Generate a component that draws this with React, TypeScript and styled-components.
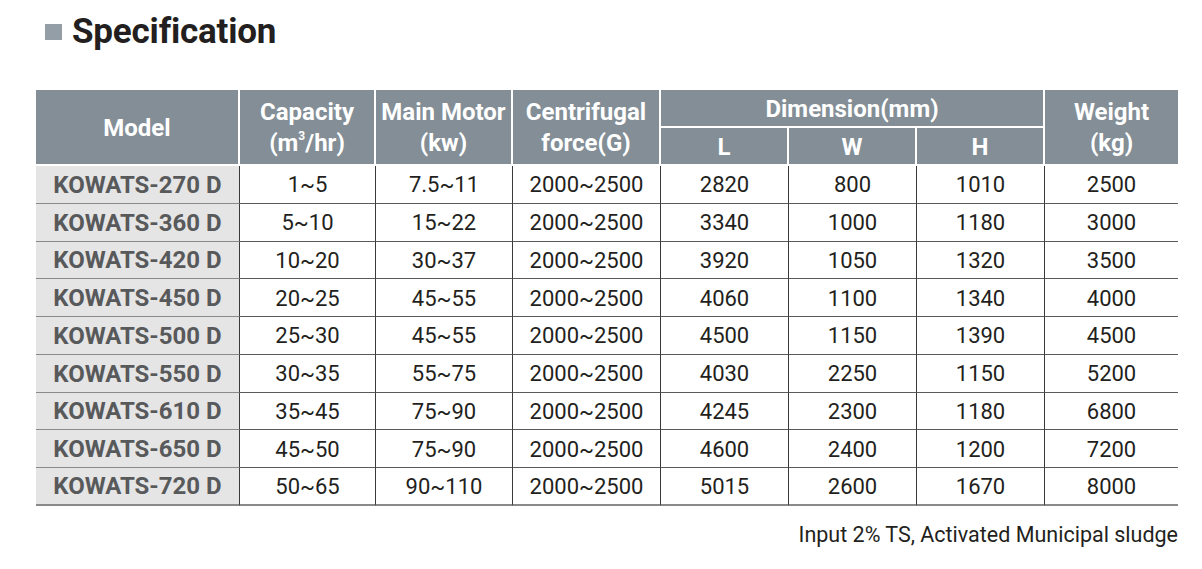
import React from 'react';
import styled, { createGlobalStyle } from 'styled-components';

const GlobalStyle = createGlobalStyle`
	body {
		margin: 0;
		background: #ffffff;
		font-family: Roboto, 'Liberation Sans', sans-serif;
	}
`;

const Page = styled.div`
	width: 1202px;
	height: 569px;
	padding: 0 24px 0 36px;
	box-sizing: border-box;
	overflow: hidden;
`;

const Title = styled.h1`
	display: flex;
	align-items: center;
	gap: 10px;
	margin: 0 0 0 9px;
	height: 62px;
	font-size: 35px;
	font-weight: 700;
	color: #231f20;
	letter-spacing: -0.2px;
`;

const Bullet = styled.span`
	width: 17px;
	height: 16px;
	background: #949ea6;
	margin-top: 2px;
`;

const Table = styled.table`
	width: 1142px;
	margin-top: 28px;
	border-collapse: separate;
	border-spacing: 0;
	table-layout: fixed;
`;

const Head = styled.th<{ $last?: boolean }>`
	background: #838e96;
	color: #ffffff;
	font-size: 24px;
	font-weight: 700;
	line-height: 31px;
	padding: 2px 0 0;
	height: 34px;
	border-bottom: 2px solid #ffffff;
	border-right: ${p => (p.$last ? 'none' : '2px solid #ffffff')};
	text-align: center;
	vertical-align: middle;
`;

const Sup = styled.sup`
	font-size: 12px;
	line-height: 0;
	vertical-align: 11px;
`;

const Row = styled.tr`
	height: 37.75px;

	&:last-child td {
		border-bottom: 2px solid #8a8a8a;
	}
`;

const Cell = styled.td<{ $model?: boolean; $last?: boolean }>`
	padding: 1px 0 0;
	text-align: center;
	vertical-align: middle;
	color: ${p => (p.$model ? '#58595b' : '#231f20')};
	font-weight: ${p => (p.$model ? 700 : 400)};
	font-size: ${p => (p.$model ? '24px' : '22px')};
	background: ${p => (p.$model ? '#e5e5e5' : '#ffffff')};
	border-bottom: 1px solid ${p => (p.$model ? '#8a8a8a' : '#5a5a5a')};
	border-right: ${p => (p.$last ? 'none' : '1px solid #3a3a3a')};
`;

const Note = styled.p`
	width: 1142px;
	margin: 16px 0 0;
	text-align: right;
	font-size: 21.5px;
	color: #231f20;
`;

const rows = [
	['KOWATS-270 D', '1~5', '7.5~11', '2000~2500', '2820', '800', '1010', '2500'],
	['KOWATS-360 D', '5~10', '15~22', '2000~2500', '3340', '1000', '1180', '3000'],
	['KOWATS-420 D', '10~20', '30~37', '2000~2500', '3920', '1050', '1320', '3500'],
	['KOWATS-450 D', '20~25', '45~55', '2000~2500', '4060', '1100', '1340', '4000'],
	['KOWATS-500 D', '25~30', '45~55', '2000~2500', '4500', '1150', '1390', '4500'],
	['KOWATS-550 D', '30~35', '55~75', '2000~2500', '4030', '2250', '1150', '5200'],
	['KOWATS-610 D', '35~45', '75~90', '2000~2500', '4245', '2300', '1180', '6800'],
	['KOWATS-650 D', '45~50', '75~90', '2000~2500', '4600', '2400', '1200', '7200'],
	['KOWATS-720 D', '50~65', '90~110', '2000~2500', '5015', '2600', '1670', '8000'],
];

const widths = [204, 136, 137, 148, 128, 128, 128, 133];

const App = () => (
	<Page>
		<GlobalStyle />
		<Title>
			<Bullet />
			Specification
		</Title>
		<Table>
			<colgroup>
				{widths.map((w, i) => (
					<col key={i} style={{ width: w }} />
				))}
			</colgroup>
			<thead>
				<tr>
					<Head rowSpan={2}>Model</Head>
					<Head rowSpan={2}>
						Capacity
						<br />
						(m<Sup>3</Sup>/hr)
					</Head>
					<Head rowSpan={2}>
						Main Motor
						<br />
						(kw)
					</Head>
					<Head rowSpan={2}>
						Centrifugal
						<br />
						force(G)
					</Head>
					<Head colSpan={3}>Dimension(mm)</Head>
					<Head rowSpan={2} $last>
						Weight
						<br />
						(kg)
					</Head>
				</tr>
				<tr>
					<Head>L</Head>
					<Head>W</Head>
					<Head>H</Head>
				</tr>
			</thead>
			<tbody>
				{rows.map(r => (
					<Row key={r[0]}>
						{r.map((v, i) => (
							<Cell key={i} $model={i === 0} $last={i === r.length - 1}>
								{v}
							</Cell>
						))}
					</Row>
				))}
			</tbody>
		</Table>
		<Note>Input 2% TS, Activated Municipal sludge</Note>
	</Page>
);

export default App;
